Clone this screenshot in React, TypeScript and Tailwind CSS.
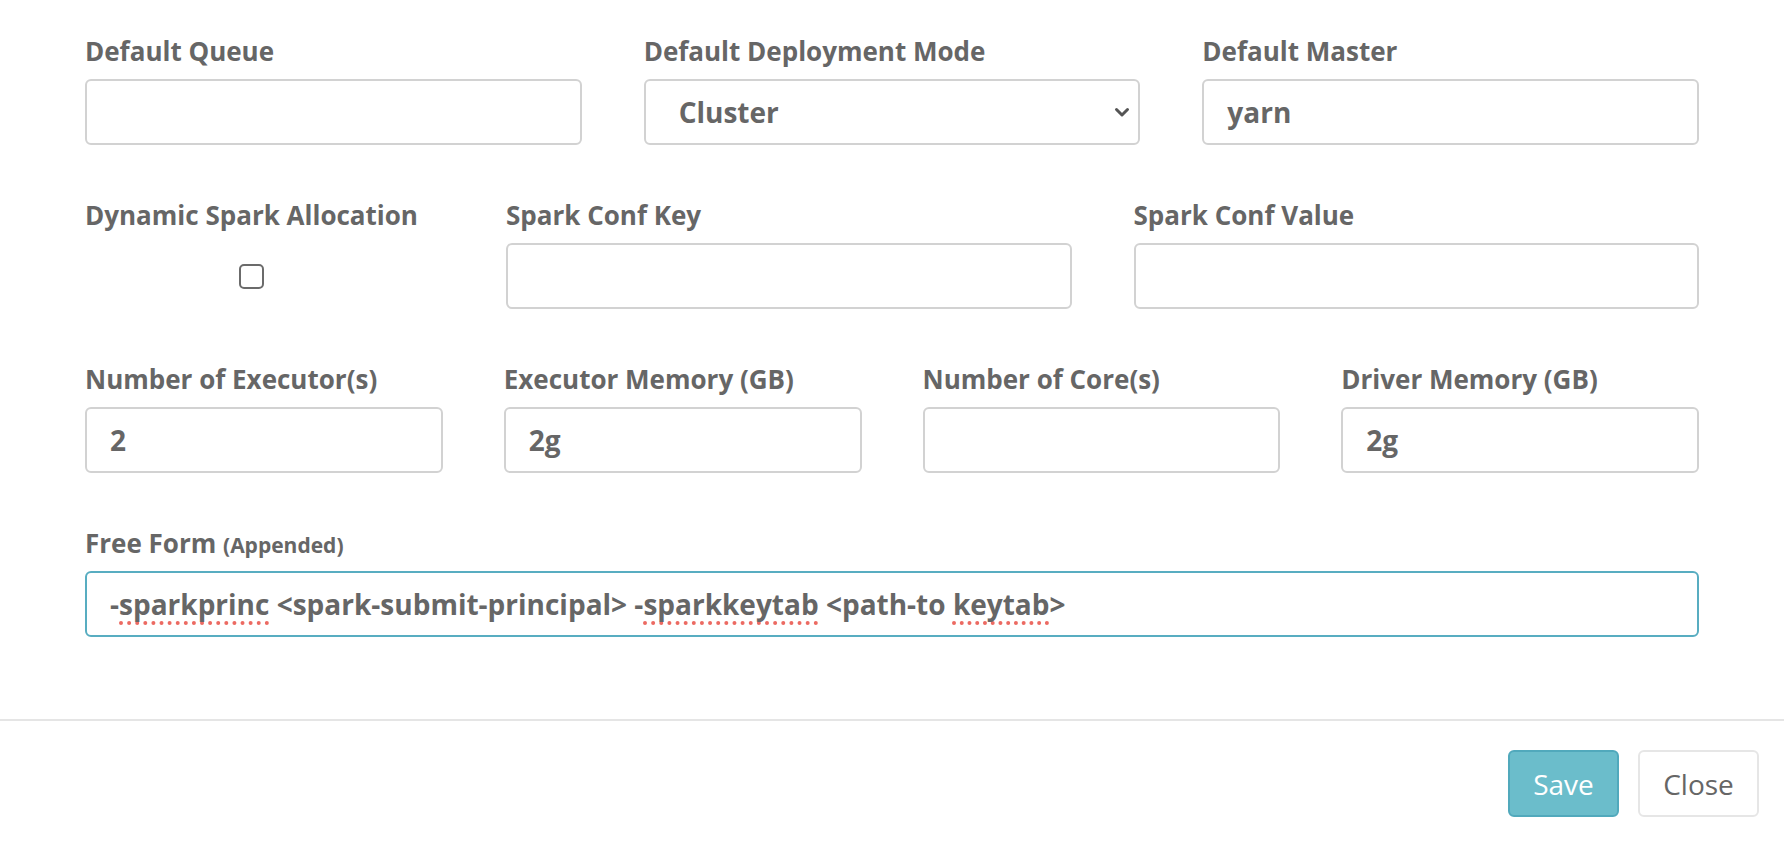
import React from "react";

const font = { fontFamily: '"Open Sans", "Liberation Sans", sans-serif' };

function Label({ children }: { children: React.ReactNode }) {
  return (
    <div className="h-[34px] leading-[34px] text-[26px] font-bold text-[#666] whitespace-nowrap">
      {children}
    </div>
  );
}

function Field({ value, focused }: { value?: string; focused?: boolean }) {
  return (
    <div
      className={
        "mt-[11px] h-[66px] rounded-[6px] border-2 bg-white flex items-center px-[23px] text-[28px] font-bold text-[#666] " +
        (focused ? "border-[#58adc1]" : "border-[#d2d2d2]")
      }
    >
      {value}
    </div>
  );
}

function Spell({ children }: { children: React.ReactNode }) {
  return (
    <span className="underline decoration-dotted decoration-[#ec6a62] decoration-[4px] underline-offset-[6px] [text-decoration-skip-ink:none]">
      {children}
    </span>
  );
}

export default function App() {
  return (
    <div className="w-[1784px] h-[844px] bg-white flex flex-col" style={font}>
      <div className="px-[85px] pt-[34px] pb-[82px] flex flex-col gap-[53px]">
        {/* Row 1 */}
        <div className="grid grid-cols-3 gap-x-[62px]">
          <div>
            <Label>Default Queue</Label>
            <Field />
          </div>
          <div>
            <Label>Default Deployment Mode</Label>
            <div className="mt-[11px] h-[66px] rounded-[6px] border-2 border-[#d2d2d2] bg-white flex items-center justify-between pl-[33px] pr-[8px] text-[28px] font-bold text-[#666]">
              <span>Cluster</span>
              <svg width="16" height="11" viewBox="0 0 16 11" className="mt-[1px]">
                <polyline points="2.5,2.5 8,8 13.5,2.5" fill="none" stroke="#555" strokeWidth="3" strokeLinecap="round" strokeLinejoin="round" />
              </svg>
            </div>
          </div>
          <div>
            <Label>Default Master</Label>
            <Field value="yarn" />
          </div>
        </div>

        {/* Row 2 */}
        <div className="grid grid-cols-[359px_1fr_1fr] gap-x-[62px]">
          <div>
            <div className="inline-flex flex-col items-center">
              <Label>Dynamic Spark Allocation</Label>
              <div className="mt-[32px] w-[25px] h-[25px] rounded-[5px] border-2 border-[#6b6b6b] bg-white" />
            </div>
          </div>
          <div>
            <Label>Spark Conf Key</Label>
            <Field />
          </div>
          <div>
            <Label>Spark Conf Value</Label>
            <Field />
          </div>
        </div>

        {/* Row 3 */}
        <div className="grid grid-cols-4 gap-x-[61px]">
          <div>
            <Label>Number of Executor(s)</Label>
            <Field value="2" />
          </div>
          <div>
            <Label>Executor Memory (GB)</Label>
            <Field value="2g" />
          </div>
          <div>
            <Label>Number of Core(s)</Label>
            <Field />
          </div>
          <div>
            <Label>Driver Memory (GB)</Label>
            <Field value="2g" />
          </div>
        </div>

        {/* Row 4 */}
        <div>
          <Label>
            Free Form <span className="text-[21px]">(Appended)</span>
          </Label>
          <div className="mt-[11px] h-[66px] rounded-[6px] border-2 border-[#58adc1] bg-white flex items-center px-[23px] text-[28px] font-bold text-[#666] whitespace-pre">
            -<Spell>sparkprinc</Spell> &lt;spark-submit-principal&gt; -<Spell>sparkkeytab</Spell> &lt;path-to <Spell>keytab</Spell>&gt;
          </div>
        </div>
      </div>

      {/* Footer */}
      <div className="border-t-2 border-[#e5e5e5] flex justify-end gap-[19px] pt-[29px] pb-[27px] pr-[25px]">
        <button className="h-[67px] w-[111px] rounded-[6px] border-2 border-[#51a9bc] bg-[#6bbdcb] text-white text-[28px]">
          Save
        </button>
        <button className="h-[67px] w-[121px] rounded-[6px] border-2 border-[#e6e6e6] bg-white text-[#666] text-[28px]">
          Close
        </button>
      </div>
    </div>
  );
}
